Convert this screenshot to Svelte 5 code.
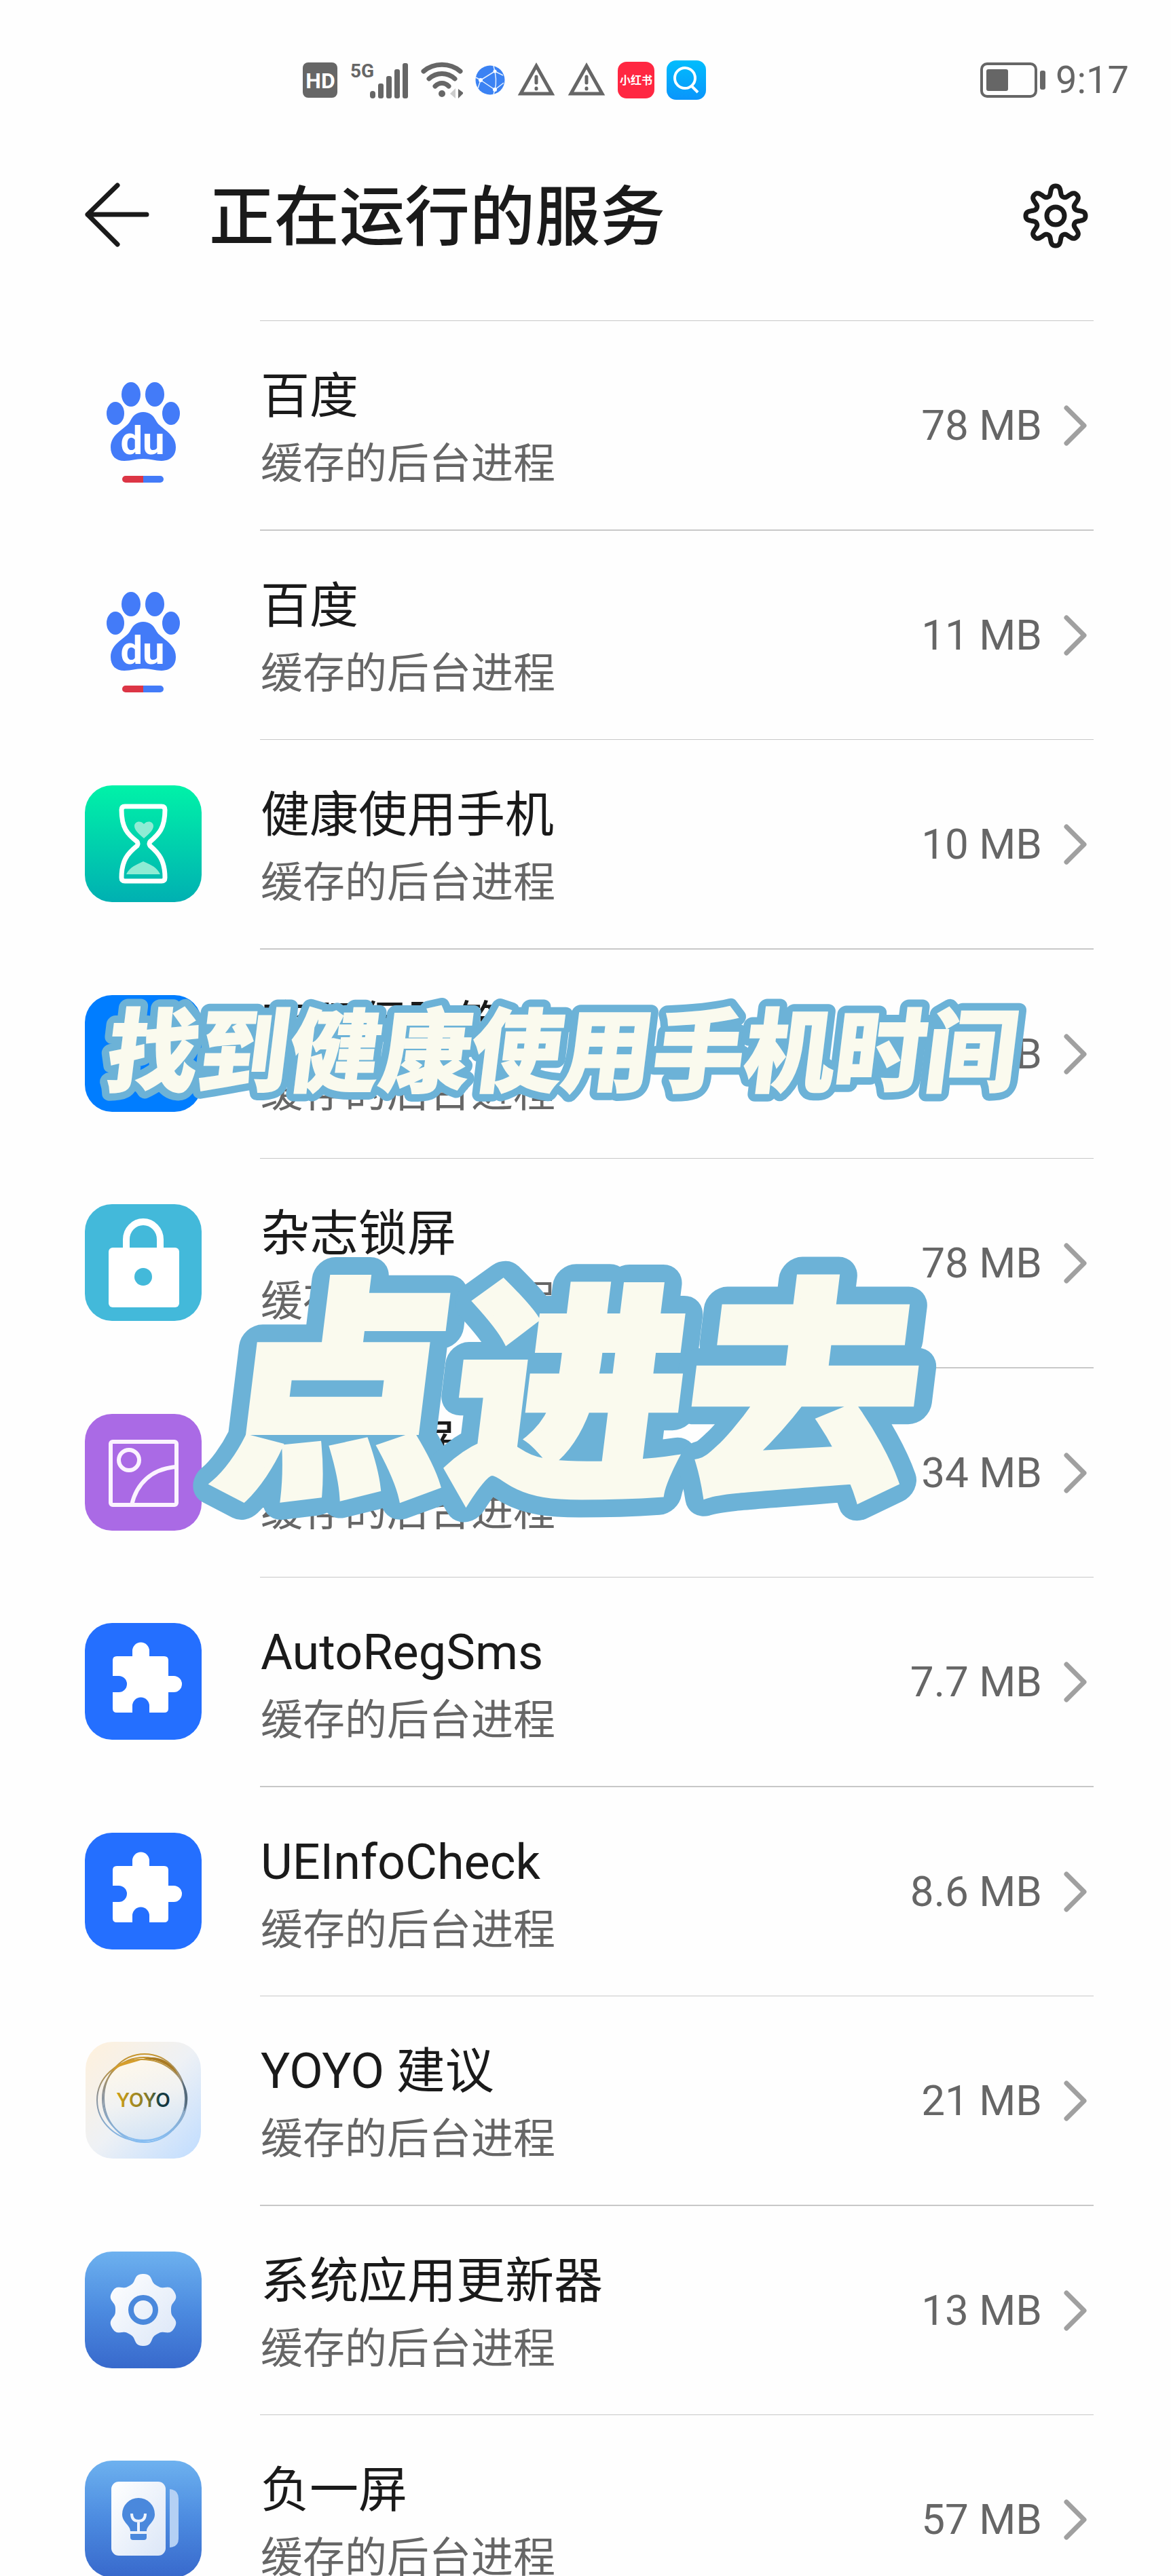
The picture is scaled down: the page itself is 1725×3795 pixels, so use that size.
<script lang="ts">
  type Service = { name: string; icon: string; size: string };

  const services: Service[] = [
    { name: '百度', icon: 'baidu', size: '78 MB' },
    { name: '百度', icon: 'baidu', size: '11 MB' },
    { name: '健康使用手机', icon: 'hourglass', size: '10 MB' },
    { name: '密码保险箱', icon: 'vault', size: '16 MB' },
    { name: '杂志锁屏', icon: 'lock', size: '78 MB' },
    { name: '动态锁屏', icon: 'gallery', size: '34 MB' },
    { name: 'AutoRegSms', icon: 'puzzle', size: '7.7 MB' },
    { name: 'UEInfoCheck', icon: 'puzzle', size: '8.6 MB' },
    { name: 'YOYO 建议', icon: 'yoyo', size: '21 MB' },
    { name: '系统应用更新器', icon: 'gear', size: '13 MB' },
    { name: '负一屏', icon: 'card', size: '57 MB' }
  ];

  // Closed outline of a cog whose teeth swell softly around a mean radius.
  function cog(cx: number, cy: number, teeth: number, mean: number, depth: number, sharp: number) {
    const points: string[] = [];
    for (let i = 0; i < 360; i += 1) {
      const a = (i * Math.PI) / 180;
      const r = mean + (depth * Math.tanh(sharp * Math.cos(teeth * a))) / Math.tanh(sharp);
      points.push(`${(cx + r * Math.sin(a)).toFixed(2)} ${(cy - r * Math.cos(a)).toFixed(2)}`);
    }
    return `M${points.join('L')}Z`;
  }

  const settingsCog = cog(48, 48, 8, 37, 7, 1.5);
  const updaterCog = cog(86, 86, 6, 47, 6, 1.5);
</script>

<div class="screen">
  <div class="status">
    <div class="signals">
      <svg width="52" height="52" viewBox="0 0 52 52" aria-label="HD">
        <rect width="51" height="52" rx="8" fill="#666" />
        <text x="26" y="38" text-anchor="middle" class="hd">HD</text>
      </svg>
      <svg width="86" height="64" viewBox="0 -4 86 64" aria-label="5G">
        <text x="0" y="24" class="net">5G</text>
        <g fill="#666">
          <rect x="29" y="44" width="8" height="11" rx="4" />
          <rect x="41" y="33" width="8" height="22" rx="3" />
          <rect x="53" y="22" width="8" height="33" rx="3" />
          <rect x="65" y="12" width="8" height="43" rx="3" />
          <rect x="77" y="3" width="8" height="52" rx="3" />
        </g>
      </svg>
      <svg width="62" height="54" viewBox="0 0 62 54" aria-label="Wi-Fi">
        <g fill="none" stroke="#666" stroke-width="7" stroke-linecap="round">
          <path d="M4 14C19 1 43 1 58 14" />
          <path d="M12 25C23 15 39 15 50 25" />
          <path d="M21 36C27 30 35 30 41 36" />
        </g>
        <circle cx="31" cy="47" r="5" fill="#666" />
        <path d="M43 47l8-8v15z" fill="#ccc" />
        <path d="M55 54V40l8 6z" fill="#666" />
      </svg>
      <svg width="44" height="44" viewBox="0 0 44 44" aria-hidden="true">
        <circle cx="22" cy="22" r="21.5" fill="#3b82f3" />
        <g fill="none" stroke="#e4f0ff" stroke-width="1.5">
          <path d="M27 1Q33 22 29 36M8 22L29 9M8 22L29 36L42 26M29 9L41 15M8 22L1 18M8 22L4 34M29 36L27 43" />
        </g>
        <g fill="#fff"><circle cx="8" cy="22" r="3" /><circle cx="29" cy="9" r="2.5" /><circle cx="29" cy="36" r="3" /></g>
      </svg>
      {#each [0, 1] as n (n)}
        <svg width="56" height="54" viewBox="0 0 56 54" aria-hidden="true">
          <path d="M28 6L51 47H5Z" fill="none" stroke="#666" stroke-width="5" />
          <path d="M28 22v9M28 39v1" stroke="#666" stroke-width="5" stroke-linecap="round" />
        </svg>
      {/each}
      <svg width="54" height="54" viewBox="0 0 54 54" aria-hidden="true">
        <rect width="54" height="54" rx="13" fill="#ff2742" />
        <text x="27" y="33" text-anchor="middle" class="rednote">小红书</text>
      </svg>
      <svg width="58" height="58" viewBox="0 0 58 58" aria-hidden="true">
        <defs>
          <linearGradient id="search" x1="0" y1="0" x2="0" y2="1">
            <stop offset="0" stop-color="#00bdfd" /><stop offset="1" stop-color="#0a95fb" />
          </linearGradient>
        </defs>
        <rect width="58" height="58" rx="14" fill="url(#search)" />
        <circle cx="27" cy="26" r="15" fill="none" stroke="#fff" stroke-width="4" />
        <path d="M37 38l9 9" stroke="#fff" stroke-width="4" />
      </svg>
    </div>
    <div class="power">
      <svg width="97" height="52" viewBox="0 0 97 52" aria-label="battery">
        <rect x="2" y="2" width="80" height="48" rx="8" fill="none" stroke="#666" stroke-width="4" />
        <rect x="9" y="10" width="32" height="32" rx="3" fill="#666" />
        <rect x="88" y="12" width="8" height="28" rx="3" fill="#666" />
      </svg>
      <time>9:17</time>
    </div>
  </div>

  <header>
    <button aria-label="返回">
      <svg width="98" height="98" viewBox="0 0 98 98" fill="none" stroke="#1a1a1a" stroke-width="7" stroke-linecap="round" stroke-linejoin="round">
        <path d="M49 4L5 47L49 91M5 47H92" />
      </svg>
    </button>
    <h1>正在运行的服务</h1>
    <button aria-label="设置">
      <svg width="96" height="96" viewBox="0 0 96 96" fill="none" stroke="#1a1a1a" stroke-width="7" stroke-linejoin="round">
        <path d={settingsCog} />
        <circle cx="48" cy="48" r="13" />
      </svg>
    </button>
  </header>

  <ul>
    {#each services as s, i (i)}
      <li>
        <svg class="icon" viewBox="0 0 172 172" aria-hidden="true">
          {#if s.icon === 'baidu'}
            <g fill="#437bf8">
              <ellipse cx="68" cy="41" rx="14" ry="18" />
              <ellipse cx="103" cy="41" rx="14" ry="18" />
              <ellipse cx="45" cy="69" rx="13" ry="17" />
              <ellipse cx="127" cy="69" rx="13" ry="17" />
              <path d="M86 67C95 67 101 72 105 80C110 91 134 98 134 119C134 132 125 139 113 139C103 139 98 136 86 136C74 136 69 139 58 139C46 139 38 132 38 119C38 98 62 91 67 80C71 72 77 67 86 67Z" />
              <path d="M86 161h25a5 5 0 0 1 0 10H86z" />
            </g>
            <path d="M86 161H60a5 5 0 0 0 0 10h26z" fill="#dc3545" />
            <text x="85" y="129" text-anchor="middle" class="du">du</text>
          {:else if s.icon === 'hourglass'}
            <defs>
              <linearGradient id="mint" x1="0" y1="0" x2="0" y2="1">
                <stop offset="0" stop-color="#00f2a8" /><stop offset="1" stop-color="#00b0b2" />
              </linearGradient>
            </defs>
            <rect width="172" height="172" rx="40" fill="url(#mint)" />
            <path d="M59 31H113Q118 31 118 36C118 63 109 72 96 83Q94 86 96 89C109 100 118 111 118 136Q118 141 113 141H59Q54 141 54 136C54 111 63 100 77 89Q79 86 77 83C63 72 54 63 54 36Q54 31 59 31Z" fill="none" stroke="#fff" stroke-width="7" />
            <g fill="#8eecd4">
              <path d="M87 78C80 72 73 66 73 60C73 53 82 51 87 57C92 51 101 53 101 60C101 66 94 72 87 78Z" />
              <path d="M61 131C66 120 78 116 86 112C95 116 106 120 111 131Z" />
            </g>
          {:else if s.icon === 'vault'}
            <rect width="172" height="172" rx="40" fill="#007dff" />
          {:else if s.icon === 'lock'}
            <rect width="172" height="172" rx="40" fill="#43b9da" />
            <path d="M61 70V52a25 26 0 0 1 50 0V70" fill="none" stroke="#fff" stroke-width="10" />
            <rect x="35" y="64" width="104" height="88" rx="6" fill="#fff" />
            <circle cx="86" cy="107" r="13" fill="#43b9da" />
          {:else if s.icon === 'gallery'}
            <rect width="172" height="172" rx="40" fill="#aa6ae5" />
            <g fill="none" stroke="#fbf3ff" stroke-width="6">
              <rect x="38" y="41" width="97" height="93" rx="3" />
              <circle cx="65" cy="68" r="15" />
              <path d="M69 134C76 103 98 81 134 78" />
            </g>
          {:else if s.icon === 'puzzle'}
            <rect width="172" height="172" rx="40" fill="#246fff" />
            <path d="M47 49H70V41A12 12 0 0 1 95 41V49H117Q123 49 123 55V78H131A12 12 0 0 1 131 102H123V126Q123 132 117 132H95V122A12 12 0 0 0 70 122V132H47Q41 132 41 126V102H50A12 12 0 0 0 50 78H41V55Q41 49 47 49Z" fill="#fff" />
          {:else if s.icon === 'yoyo'}
            <defs>
              <linearGradient id="pearl" x1="0" y1="0" x2="1" y2="1">
                <stop offset="0" stop-color="#fff1dc" /><stop offset="0.5" stop-color="#eef1f5" /><stop offset="1" stop-color="#bfdcff" />
              </linearGradient>
              <linearGradient id="rim" x1="0.4" y1="0" x2="0.5" y2="1">
                <stop offset="0" stop-color="#c8952a" /><stop offset="0.4" stop-color="#8b9096" /><stop offset="1" stop-color="#86bdf2" />
              </linearGradient>
              <linearGradient id="ball" x1="0.3" y1="0" x2="0.6" y2="1">
                <stop offset="0" stop-color="#fff8ea" /><stop offset="0.5" stop-color="#f1f2f2" /><stop offset="1" stop-color="#d3e4f6" />
              </linearGradient>
              <linearGradient id="word" x1="0" y1="0" x2="1" y2="0">
                <stop offset="0" stop-color="#d0a017" /><stop offset="0.6" stop-color="#83792a" /><stop offset="0.8" stop-color="#124048" /><stop offset="1" stop-color="#1c3338" />
              </linearGradient>
            </defs>
            <rect x="1" width="170" height="172" rx="40" fill="url(#pearl)" />
            <circle cx="87" cy="84" r="60" fill="url(#ball)" />
            <g fill="none" stroke="url(#rim)">
              <ellipse cx="84" cy="86" rx="66" ry="60" stroke-width="2" />
              <ellipse cx="88" cy="83" rx="60" ry="65" stroke-width="2" />
              <circle cx="87" cy="84" r="61" stroke-width="2" />
            </g>
            <path d="M39 45C49 28 66 27 82 27C67 33 51 33 39 45Z" fill="#d69e2c" />
            <path d="M86 25C110 17 131 33 138 50C124 32 106 26 86 25Z" fill="#a97a22" />
            <path d="M142 55C152 70 155 88 146 103C149 87 148 72 142 55Z" fill="#53697a" />
            <text x="86" y="96" text-anchor="middle" class="yoyo" fill="url(#word)">YOYO</text>
          {:else if s.icon === 'gear'}
            <defs>
              <linearGradient id="sky" x1="0" y1="0" x2="0" y2="1">
                <stop offset="0" stop-color="#6db1ef" /><stop offset="0.5" stop-color="#4c8be0" /><stop offset="1" stop-color="#3869cc" />
              </linearGradient>
              <linearGradient id="frost" x1="0" y1="0" x2="1" y2="1">
                <stop offset="0" stop-color="#fff" /><stop offset="1" stop-color="#dbe6f7" />
              </linearGradient>
            </defs>
            <rect width="172" height="172" rx="40" fill="url(#sky)" />
            <path d={updaterCog} fill="url(#frost)" />
            <circle cx="86" cy="86" r="18" fill="none" stroke="#4a88dc" stroke-width="8" />
          {:else}
            <rect width="172" height="172" rx="40" fill="url(#sky)" />
            <path d="M125 42Q138 43 138 56V115Q138 127 125 128Z" fill="#b4d0f4" />
            <rect x="39" y="31" width="80" height="109" rx="11" fill="url(#frost)" />
            <path d="M67 104C67 95 55 91 55 79A24 24 0 0 1 103 79C103 91 91 95 91 104Z" fill="#4a88dc" />
            <path d="M67 108H91V113Q91 117 87 117H71Q67 117 67 113Z" fill="#4a88dc" />
            <path d="M69 78Q69 89 79 89Q89 89 89 78M79 89V105" fill="none" stroke="#eef4fd" stroke-width="4" />
          {/if}
        </svg>
        <button class="service">
          <span class="label">
            <span class="name">{s.name}</span>
            <span class="state">缓存的后台进程</span>
          </span>
          <span class="size">{s.size}</span>
          <svg class="chevron" width="34" height="62" viewBox="0 0 34 62" fill="none" stroke="#a0a0a0" stroke-width="7" stroke-linecap="round" stroke-linejoin="round" aria-hidden="true">
            <path d="M4 5L30 31L4 57" />
          </svg>
        </button>
      </li>
    {/each}
  </ul>

  <svg class="captions" viewBox="0 0 1725 900">
    <g class="small" transform="translate(153 198) skewX(-7)">
      <g class="outline"><text id="caption-find">找到健康使用手机时间</text></g>
      <use class="body" href="#caption-find" aria-hidden="true" />
    </g>
    <g class="large" transform="translate(309 777) skewX(-7)">
      <g class="outline"><text id="caption-tap">点进去</text></g>
      <use class="body" href="#caption-tap" aria-hidden="true" />
    </g>
  </svg>
</div>

<style>
  :global(body) {
    background: #fefefe;
  }
  .screen {
    position: relative;
    height: 100vh;
    overflow: hidden;
    background: #fefefe;
    color: #1a1a1a;
    font-family: Roboto, 'Noto Sans CJK SC', sans-serif;
  }
  svg {
    display: block;
    flex: none;
  }
  .status {
    display: flex;
    justify-content: space-between;
    align-items: center;
    height: 236px;
    padding: 0 62px 0 446px;
  }
  .signals,
  .power {
    display: flex;
    align-items: center;
    gap: 18px;
  }
  .power {
    gap: 14px;
  }
  time {
    color: #666;
    font-size: 56px;
    line-height: 64px;
  }
  .hd {
    font-size: 32px;
    font-weight: 700;
    fill: #fff;
  }
  .net {
    font-size: 28px;
    font-weight: 700;
    fill: #666;
  }
  .rednote {
    font-size: 16px;
    font-weight: 700;
    fill: #fff;
  }
  .du {
    font-size: 58px;
    font-weight: 700;
    fill: #fff;
  }
  .yoyo {
    font-family: Inter, sans-serif;
    font-size: 28px;
    font-weight: 600;
  }
  header {
    display: flex;
    align-items: center;
    height: 164px;
    padding: 0 122px 0 124px;
  }
  button {
    border: 0;
    padding: 0;
    background: none;
    color: inherit;
    font: inherit;
    text-align: left;
    cursor: pointer;
  }
  h1 {
    flex: 1;
    margin: 0 0 0 86px;
    padding-top: 4px;
    font-size: 96px;
    font-weight: 500;
    line-height: 120px;
  }
  ul {
    margin: 72px 0 0;
    padding: 0;
    list-style: none;
  }
  li {
    display: flex;
    align-items: center;
    gap: 86px;
    padding: 0 114px 0 125px;
  }
  .icon {
    width: 172px;
    height: 172px;
  }
  .service {
    flex: 1;
    display: flex;
    align-items: center;
    height: 308px;
    border-top: 1px solid #c8c8c8;
  }
  li:nth-child(even) .service {
    height: 309px;
    border-top-width: 2px;
  }
  .label {
    flex: 1;
    display: flex;
    flex-direction: column;
    padding: 14px 0 0 1px;
  }
  .name {
    font-size: 72px;
    line-height: 100px;
  }
  .state,
  .size {
    color: #666;
    font-size: 62px;
    line-height: 100px;
  }
  .chevron {
    margin: 0 10px 0 32px;
  }
  .captions {
    position: absolute;
    top: 1400px;
    left: 0;
    width: 100%;
    pointer-events: none;
    font-family: 'Noto Sans CJK SC', sans-serif;
    font-weight: 900;
  }
  .outline {
    fill: #6cb2d7;
    stroke: #6cb2d7;
    stroke-linejoin: round;
  }
  .body {
    fill: #fafaee;
    stroke: #fafaee;
    stroke-linejoin: miter;
  }
  .small {
    font-size: 134px;
  }
  .small .outline {
    stroke-width: 24px;
  }
  .small .body {
    stroke-width: 2px;
  }
  .large {
    font-size: 344px;
  }
  .large .outline {
    stroke-width: 62px;
  }
  .large .body {
    stroke-width: 10px;
  }
</style>
